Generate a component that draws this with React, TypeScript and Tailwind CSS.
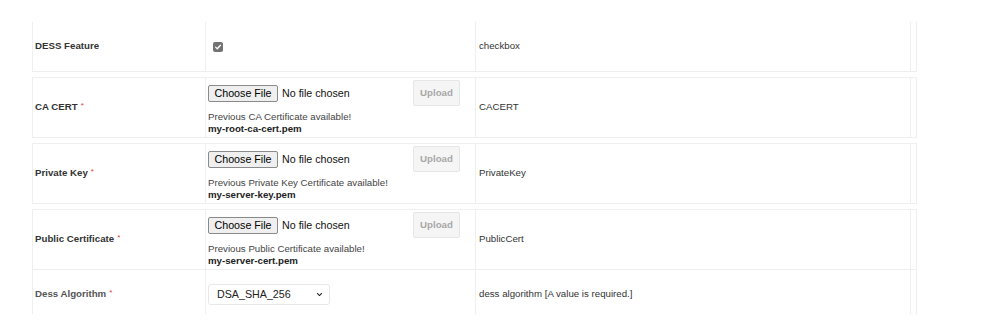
import React from "react";

type FileRow = {
  label: string;
  previous: string;
  file: string;
  key: string;
};

const FILE_ROWS: FileRow[] = [
  { label: "CA CERT", previous: "Previous CA Certificate available!", file: "my-root-ca-cert.pem", key: "CACERT" },
  { label: "Private Key", previous: "Previous Private Key Certificate available!", file: "my-server-key.pem", key: "PrivateKey" },
  { label: "Public Certificate", previous: "Previous Public Certificate available!", file: "my-server-cert.pem", key: "PublicCert" },
];

function Required() {
  return <span className="ml-[3px] relative -top-[2px] text-[8px] font-normal text-[#e0413b]">*</span>;
}

function Checkbox() {
  return (
    <span className="flex h-[10px] w-[10px] items-center justify-center rounded-[2px] bg-[#737373]">
      <svg viewBox="0 0 10 10" className="h-[8px] w-[8px]" fill="none">
        <path d="M2 5.2 L4.1 7.2 L8 2.8" stroke="#fff" strokeWidth="1.6" strokeLinecap="round" strokeLinejoin="round" />
      </svg>
    </span>
  );
}

function FileInput() {
  return (
    <div className="flex items-center">
      <span className="flex h-[17px] w-[70px] items-center justify-center rounded-[2px] border border-[#8a8a8a] bg-[#efefef] text-[10.7px] text-black">
        Choose File
      </span>
      <span className="ml-[4px] text-[10.7px] text-[#111]">No file chosen</span>
    </div>
  );
}

export default function App() {
  return (
    <div className="min-h-[334px] w-[985px] bg-white pl-[32px] pt-[22px] font-['Liberation_Sans',Arial,sans-serif] text-[9.7px] text-[#333]">
      {/* DESS feature */}
      <div className="flex h-[50px] w-[885px] border-b border-[#efefef]">
        <div className="flex w-[173px] items-center border-l border-[#efefef] pl-[2px] font-bold">DESS Feature</div>
        <div className="flex w-[270px] items-center border-l border-[#efefef] pl-[7px]">
          <Checkbox />
        </div>
        <div className="flex w-[435px] items-center border-l border-[#efefef] pl-[3px]">checkbox</div>
        <div className="w-[7px] border-x border-[#efefef]" />
      </div>

      {FILE_ROWS.map((row) => (
        <div key={row.key} className="mt-[5px] flex h-[61px] w-[885px] border-y border-[#efefef]">
          <div className="flex w-[173px] items-center border-l border-[#efefef] pl-[2px] font-bold">
            {row.label}
            <Required />
          </div>
          <div className="flex w-[270px] flex-col border-l border-[#efefef] pl-[2px] pr-[15px] pt-[2px]">
            <div className="flex items-center justify-between">
              <FileInput />
              <span className="flex h-[26px] w-[47px] items-center justify-center rounded-[2px] border border-[#e6e6e6] bg-[#f5f5f5] font-bold text-[#a8a8a8]">
                Upload
              </span>
            </div>
            <div className="mt-[5px] leading-[12px] text-[#444]">{row.previous}</div>
            <div className="leading-[12px] font-bold text-[#222]">{row.file}</div>
          </div>
          <div className="flex w-[435px] items-center border-l border-[#efefef] pl-[3px]">{row.key}</div>
          <div className="w-[7px] border-x border-[#efefef]" />
        </div>
      ))}

      {/* algorithm */}
      <div className="flex h-[44px] w-[885px]">
        <div className="flex w-[173px] items-center border-l border-[#efefef] pl-[2px] pt-[5px] font-bold text-[#555]">
          Dess Algorithm
          <Required />
        </div>
        <div className="flex w-[270px] items-center border-l border-[#efefef] pl-[2px] pt-[5px]">
          <div className="flex h-[21px] w-[122px] items-center justify-between rounded-[3px] border border-[#e8e8e8] bg-white pl-[8px] pr-[6px] text-[10.7px] text-[#222]">
            <span>DSA_SHA_256</span>
            <svg viewBox="0 0 10 10" className="h-[7px] w-[7px]" fill="none">
              <path d="M2 3.5 L5 6.5 L8 3.5" stroke="#222" strokeWidth="1.5" strokeLinecap="round" strokeLinejoin="round" />
            </svg>
          </div>
        </div>
        <div className="flex w-[435px] items-center border-l border-[#efefef] pl-[3px] pt-[5px]">
          dess algorithm [A value is required.]
        </div>
        <div className="w-[7px] border-x border-[#efefef]" />
      </div>
    </div>
  );
}
